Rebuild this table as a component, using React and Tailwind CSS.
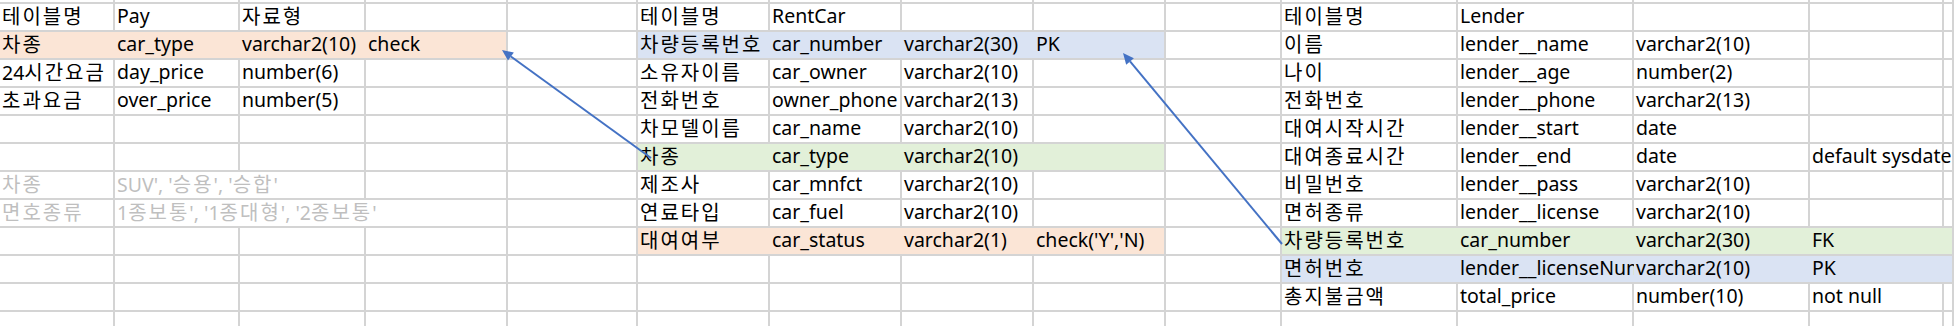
const peach = "bg-[#fbe5d6]";
const blue = "bg-[#dae3f3]";
const green = "bg-[#e2f0d9]";

// 15 columns, A..O
const rows = [
  {
    cells: ["테이블명", "Pay", "자료형", null, null, "테이블명", "RentCar", null, null, null, "테이블명", "Lender", null, null, null],
  },
  {
    cells: ["차종", "car_type", "varchar2(10)", "check", null, "차량등록번호", "car_number", "varchar2(30)", "PK", null, "이름", "lender__name", "varchar2(10)", null, null],
    fills: [
      { from: 0, to: 3, bg: peach },
      { from: 5, to: 8, bg: blue },
    ],
  },
  {
    cells: ["24시간요금", "day_price", "number(6)", null, null, "소유자이름", "car_owner", "varchar2(10)", null, null, "나이", "lender__age", "number(2)", null, null],
  },
  {
    cells: ["초과요금", "over_price", "number(5)", null, null, "전화번호", "owner_phone", "varchar2(13)", null, null, "전화번호", "lender__phone", "varchar2(13)", null, null],
  },
  {
    cells: [null, null, null, null, null, "차모델이름", "car_name", "varchar2(10)", null, null, "대여시작시간", "lender__start", "date", null, null],
  },
  {
    cells: [null, null, null, null, null, "차종", "car_type", "varchar2(10)", null, null, "대여종료시간", "lender__end", "date", "default sysdate", null],
    fills: [{ from: 5, to: 8, bg: green }],
  },
  {
    cells: [{ t: "차종", g: true }, { t: "SUV', '승용', '승합'", g: true, s: 2 }, null, null, null, "제조사", "car_mnfct", "varchar2(10)", null, null, "비밀번호", "lender__pass", "varchar2(10)", null, null],
  },
  {
    cells: [{ t: "면호종류", g: true }, { t: "1종보통', '1종대형', '2종보통'", g: true, s: 3 }, null, null, null, "연료타입", "car_fuel", "varchar2(10)", null, null, "면허종류", "lender__license", "varchar2(10)", null, null],
  },
  {
    cells: [null, null, null, null, null, "대여여부", "car_status", "varchar2(1)", "check('Y','N)", null, "차량등록번호", "car_number", "varchar2(30)", "FK", null],
    fills: [
      { from: 5, to: 8, bg: peach },
      { from: 10, to: 14, bg: green },
    ],
  },
  {
    cells: [null, null, null, null, null, null, null, null, null, null, "면허번호", { t: "lender__licenseNum", clip: true }, "varchar2(10)", "PK", null],
    fills: [{ from: 10, to: 14, bg: blue }],
  },
  {
    cells: [null, null, null, null, null, null, null, null, null, null, "총지불금액", "total_price", "number(10)", "not null", null],
  },
  { cells: Array(15).fill(null) },
];

const spanClass = { 1: "col-span-1", 2: "col-span-2", 3: "col-span-3" };

// hangul in the sheet font is wider-set than Noto CJK, so space it out a bit
function Text({ t }) {
  return t.split(/([\u3131-\uD7A3]+)/).map((part, i) =>
    /[\u3131-\uD7A3]/.test(part) ? (
      <span key={i} className="font-['Noto_Sans_CJK_KR'] text-[20px] tracking-[2px]">
        {part}
      </span>
    ) : (
      part
    )
  );
}

function Row({ cells, fills = [] }) {
  const out = [];
  let i = 0;
  while (i < 15) {
    const raw = cells[i];
    const e = raw == null ? { t: "" } : typeof raw === "string" ? { t: raw } : raw;
    const s = e.s || 1;
    const last = i + s - 1;
    const fill = fills.find((f) => i >= f.from && last <= f.to);
    const inner = fill && last < fill.to;
    out.push(
      <div
        key={i}
        className={`${spanClass[s]} h-[28px] border-b-2 border-[#d4d4d4] pl-[2px] leading-[24px] whitespace-nowrap ${inner ? "" : "border-r-2"} ${fill ? fill.bg : ""} ${e.g ? "text-[#bfbfbf]" : "text-black"} ${e.clip ? "overflow-hidden" : ""}`}
      >
        <Text t={e.t} />
      </div>
    );
    i += s;
  }
  return out;
}

function Arrow({ x1, y1, x2, y2 }) {
  // arrowhead sits at (x2, y2)
  const dx = x2 - x1;
  const dy = y2 - y1;
  const len = Math.hypot(dx, dy);
  const ux = dx / len;
  const uy = dy / len;
  const hl = 11;
  const hw = 5;
  const bx = x2 - ux * hl;
  const by = y2 - uy * hl;
  const pts = `${x2},${y2} ${bx - uy * hw},${by + ux * hw} ${bx + uy * hw},${by - ux * hw}`;
  return (
    <g>
      <line x1={x1} y1={y1} x2={bx} y2={by} stroke="#4472c4" strokeWidth="2" />
      <polygon points={pts} fill="#4472c4" />
    </g>
  );
}

export default function App() {
  return (
    <div className="relative w-[1954px] h-[326px] overflow-hidden bg-white font-['Noto_Sans','Noto_Sans_CJK_KR',sans-serif] text-[19.5px]">
      <div className="grid grid-cols-[115px_125px_126px_142px_130px_132px_132px_132px_132px_116px_176px_176px_176px_134px_10px]">
        {Array.from({ length: 15 }).map((_, i) => (
          <div key={i} className="h-[4px] border-b-2 border-r-2 border-[#d4d4d4]" />
        ))}
        {rows.map((r, idx) => (
          <Row key={idx} cells={r.cells} fills={r.fills} />
        ))}
      </div>
      <svg className="absolute inset-0 pointer-events-none" width="1954" height="326">
        <Arrow x1={651} y1={158} x2={502} y2={50} />
        <Arrow x1={1282} y1={244} x2={1123} y2={53} />
      </svg>
    </div>
  );
}
